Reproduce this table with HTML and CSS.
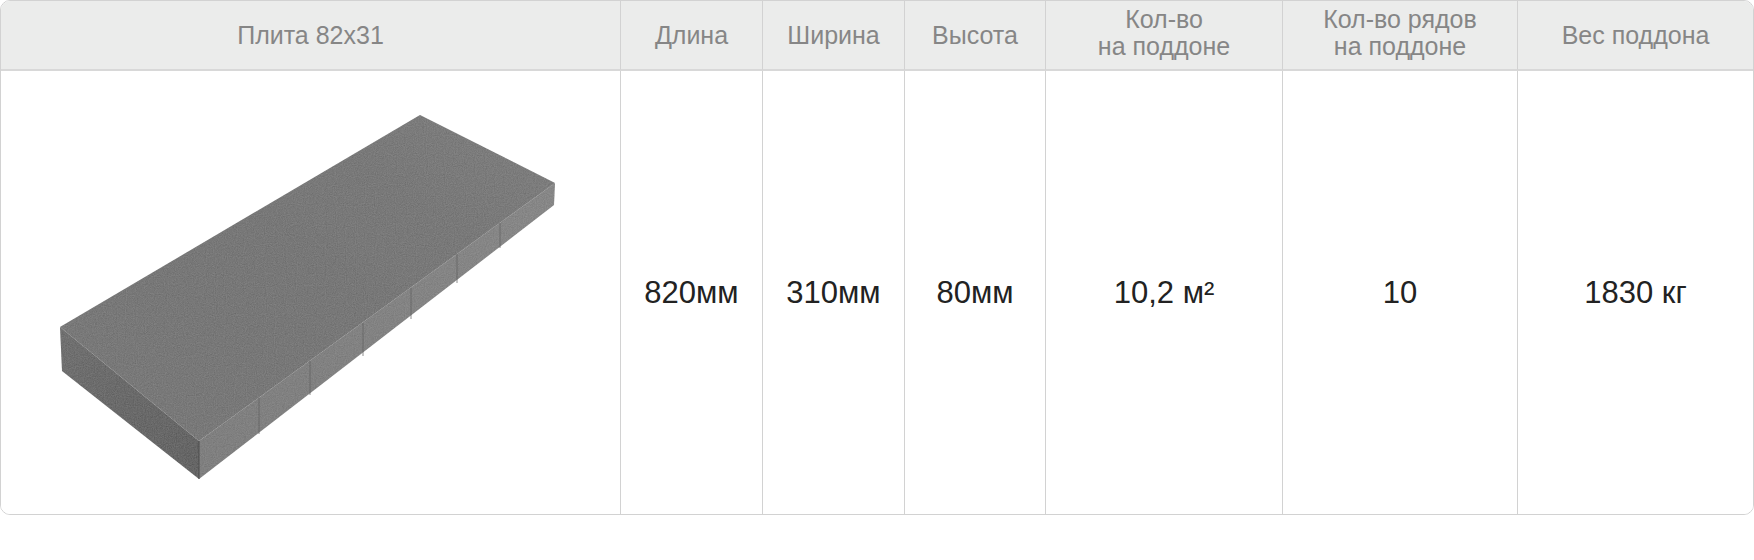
FILE: index.html
```html
<!DOCTYPE html>
<html lang="ru">
<head>
<meta charset="utf-8">
<title>Плита 82x31</title>
<link rel="stylesheet" href="styles.css">
</head>
<body>
<div class="spec">
  <div class="cell head first">Плита 82x31</div>
  <div class="cell head">Длина</div>
  <div class="cell head">Ширина</div>
  <div class="cell head">Высота</div>
  <div class="cell head two">Кол-во<br>на поддоне</div>
  <div class="cell head two">Кол-во рядов<br>на поддоне</div>
  <div class="cell head">Вес поддона</div>

  <div class="cell body first photo">
    <svg class="brick" width="619" height="443" viewBox="0 0 619 443" xmlns="http://www.w3.org/2000/svg">
      <defs>
        <filter id="grain" x="0" y="0" width="100%" height="100%">
          <feTurbulence type="fractalNoise" baseFrequency="0.9" numOctaves="2" seed="3" result="n"/>
          <feColorMatrix in="n" type="saturate" values="0" result="g"/>
          <feComponentTransfer in="g" result="g2">
            <feFuncA type="linear" slope="0" intercept="0.14"/>
          </feComponentTransfer>
          <feComposite in="g2" in2="SourceGraphic" operator="in" result="t"/>
          <feMerge><feMergeNode in="SourceGraphic"/><feMergeNode in="t"/></feMerge>
        </filter>
        <linearGradient id="topShade" x1="0" y1="1" x2="1" y2="0">
          <stop offset="0" stop-color="#6a6a6a"/>
          <stop offset="0.5" stop-color="#676767"/>
          <stop offset="1" stop-color="#707070"/>
        </linearGradient>
        <linearGradient id="sideShade" x1="0" y1="1" x2="1" y2="0">
          <stop offset="0" stop-color="#727272"/>
          <stop offset="1" stop-color="#7c7c7c"/>
        </linearGradient>
        <linearGradient id="endShade" x1="0" y1="0" x2="1" y2="1">
          <stop offset="0" stop-color="#5e5e5e"/>
          <stop offset="1" stop-color="#4c4c4c"/>
        </linearGradient>
      </defs>
      <g filter="url(#grain)">
        <polygon points="59,256 198,370 198,408 61,300" fill="url(#endShade)"/>
        <polygon points="198,370 554,112 553,134 198,408" fill="url(#sideShade)"/>
        <polygon points="59,256 419,44 554,112 198,370" fill="url(#topShade)"/>
      </g>
      <g stroke="#5f5f5f" stroke-width="1" opacity="0.7">
        <line x1="258" y1="327" x2="258" y2="363"/>
        <line x1="309" y1="290" x2="309" y2="324"/>
        <line x1="362" y1="252" x2="362" y2="285"/>
        <line x1="410" y1="217" x2="410" y2="248"/>
        <line x1="456" y1="183" x2="456" y2="212"/>
        <line x1="499" y1="152" x2="499" y2="177"/>
      </g>
      <line x1="198" y1="370" x2="198" y2="408" stroke="#4c4c4c" stroke-width="1"/>
    </svg>
  </div>
  <div class="cell body">820мм</div>
  <div class="cell body">310мм</div>
  <div class="cell body">80мм</div>
  <div class="cell body">10,2 м²</div>
  <div class="cell body">10</div>
  <div class="cell body">1830 кг</div>
</div>
</body>
</html>
```

FILE: styles.css
```css
html, body {
  margin: 0;
  padding: 0;
  background: #ffffff;
}

.spec {
  box-sizing: border-box;
  width: 1754px;
  height: 515px;
  border: 1px solid #d2d2d2;
  border-radius: 10px;
  overflow: hidden;
  display: grid;
  grid-template-columns: 619px 142px 142px 141px 237px 235px 1fr;
  grid-template-rows: 70px 443px;
  font-family: "Liberation Sans", Arial, Helvetica, sans-serif;
}

.cell {
  box-sizing: border-box;
  display: flex;
  align-items: center;
  justify-content: center;
  text-align: center;
  border-left: 1px solid #d2d2d2;
}

.cell.first {
  border-left: none;
}

.head {
  background: #ebeceb;
  color: #868686;
  font-size: 25px;
  line-height: 26px;
  border-bottom: 2px solid #d8d8d8;
}

.head.two {
  line-height: 27px;
  padding-bottom: 5px;
}

.body {
  color: #222222;
  font-size: 31px;
  line-height: 34px;
  background: #ffffff;
}

.photo {
  align-items: stretch;
  justify-content: stretch;
}

.brick {
  display: block;
}
```
